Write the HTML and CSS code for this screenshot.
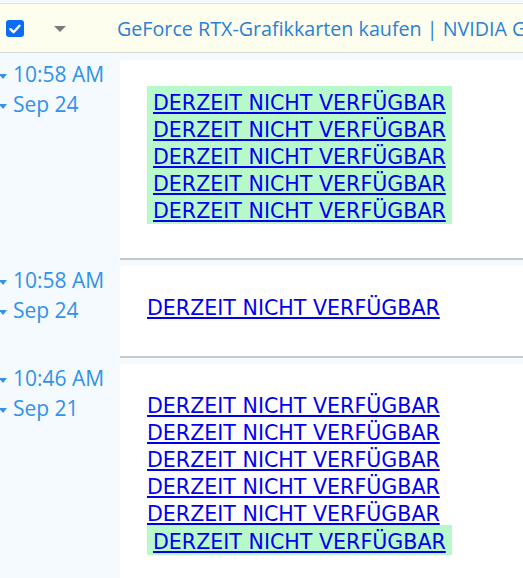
FILE: index.html
```html
<!DOCTYPE html>
<html lang="en">
<head>
  <meta charset="UTF-8">
  <title>Watch history</title>
  <link rel="stylesheet" href="styles.css">
</head>
<body>

<div class="header">
  <span class="check">
    <svg width="12" height="10" viewBox="0 0 12 10"><path d="M1.5 5.2 L4.6 8.2 L10.5 1.8" fill="none" stroke="#fff" stroke-width="2.4" stroke-linecap="round" stroke-linejoin="round"/></svg>
  </span>
  <span class="caret"></span>
  <span class="title">GeForce RTX-Grafikkarten kaufen | NVIDIA GeForce</span>
</div>

<div class="changes">
  <div class="when">
    <div class="stamp"><span class="tri"></span>10:58 AM</div>
    <div class="stamp"><span class="tri"></span>Sep 24</div>
  </div>
  <div class="diff">
    <div class="added">
      <a href="#">DERZEIT NICHT VERFÜGBAR</a>
      <a href="#">DERZEIT NICHT VERFÜGBAR</a>
      <a href="#">DERZEIT NICHT VERFÜGBAR</a>
      <a href="#">DERZEIT NICHT VERFÜGBAR</a>
      <a href="#">DERZEIT NICHT VERFÜGBAR</a>
    </div>
  </div>

  <div class="when">
    <div class="stamp"><span class="tri"></span>10:58 AM</div>
    <div class="stamp"><span class="tri"></span>Sep 24</div>
  </div>
  <div class="diff">
    <a href="#">DERZEIT NICHT VERFÜGBAR</a>
  </div>

  <div class="when">
    <div class="stamp"><span class="tri"></span>10:46 AM</div>
    <div class="stamp"><span class="tri"></span>Sep 21</div>
  </div>
  <div class="diff last">
    <a href="#">DERZEIT NICHT VERFÜGBAR</a>
    <a href="#">DERZEIT NICHT VERFÜGBAR</a>
    <a href="#">DERZEIT NICHT VERFÜGBAR</a>
    <a href="#">DERZEIT NICHT VERFÜGBAR</a>
    <a href="#">DERZEIT NICHT VERFÜGBAR</a>
    <div class="added">
      <a href="#">DERZEIT NICHT VERFÜGBAR</a>
    </div>
  </div>
</div>

</body>
</html>
```

FILE: styles.css
```css
body {
  margin: 0;
  background: #f5faff;
  font-family: "Open Sans", sans-serif;
  overflow: hidden;
}

.header {
  margin-top: 3px;
  height: 48px;
  display: flex;
  align-items: center;
  background: #fefeee;
  border-top: 1px solid #dde3ea;
  border-bottom: 1px solid #d6d9d6;
  white-space: nowrap;
  overflow: hidden;
}

.check {
  display: flex;
  align-items: center;
  justify-content: center;
  flex: none;
  width: 18px;
  height: 17px;
  margin: 1px 0 0 6px;
  border-radius: 3px;
  background: #0b6cf5;
}

.caret {
  flex: none;
  margin: 1px 0 0 30px;
  border-left: 6px solid transparent;
  border-right: 6px solid transparent;
  border-top: 6px solid #7a7a7a;
}

.title {
  margin-left: 51px;
  font-size: 19.7px;
  color: #2a80d4;
}

.changes {
  display: grid;
  grid-template-columns: 120px 1fr;
  margin-top: 7px;
}

.when {
  color: #3092e8;
  font-size: 21px;
  line-height: 30px;
}

.stamp {
  margin-top: -1px;
  margin-bottom: 1px;
}

.tri {
  display: inline-block;
  vertical-align: middle;
  margin: 0 6px 0 -1px;
  border-left: 4px solid transparent;
  border-right: 4px solid transparent;
  border-top: 5px solid #3092e8;
}

.diff {
  background: #fff;
  border-bottom: 2px solid #c6c9cc;
  margin-bottom: 6px;
  padding: 27px 0 34px 27px;
  min-height: 92px;
  box-sizing: border-box;
  font-family: "DejaVu Sans", sans-serif;
  font-size: 20.6px;
}

.diff.last {
  border-bottom: none;
  min-height: 240px;
}

.diff a {
  display: block;
  width: max-content;
  height: 27px;
  box-sizing: border-box;
  padding-top: 4px;
  line-height: 23px;
  color: #0000ee;
}

.added {
  display: inline-block;
  margin-top: -1px;
  background: #b7f9cb;
  padding: 2px 6px 1px;
}
```
